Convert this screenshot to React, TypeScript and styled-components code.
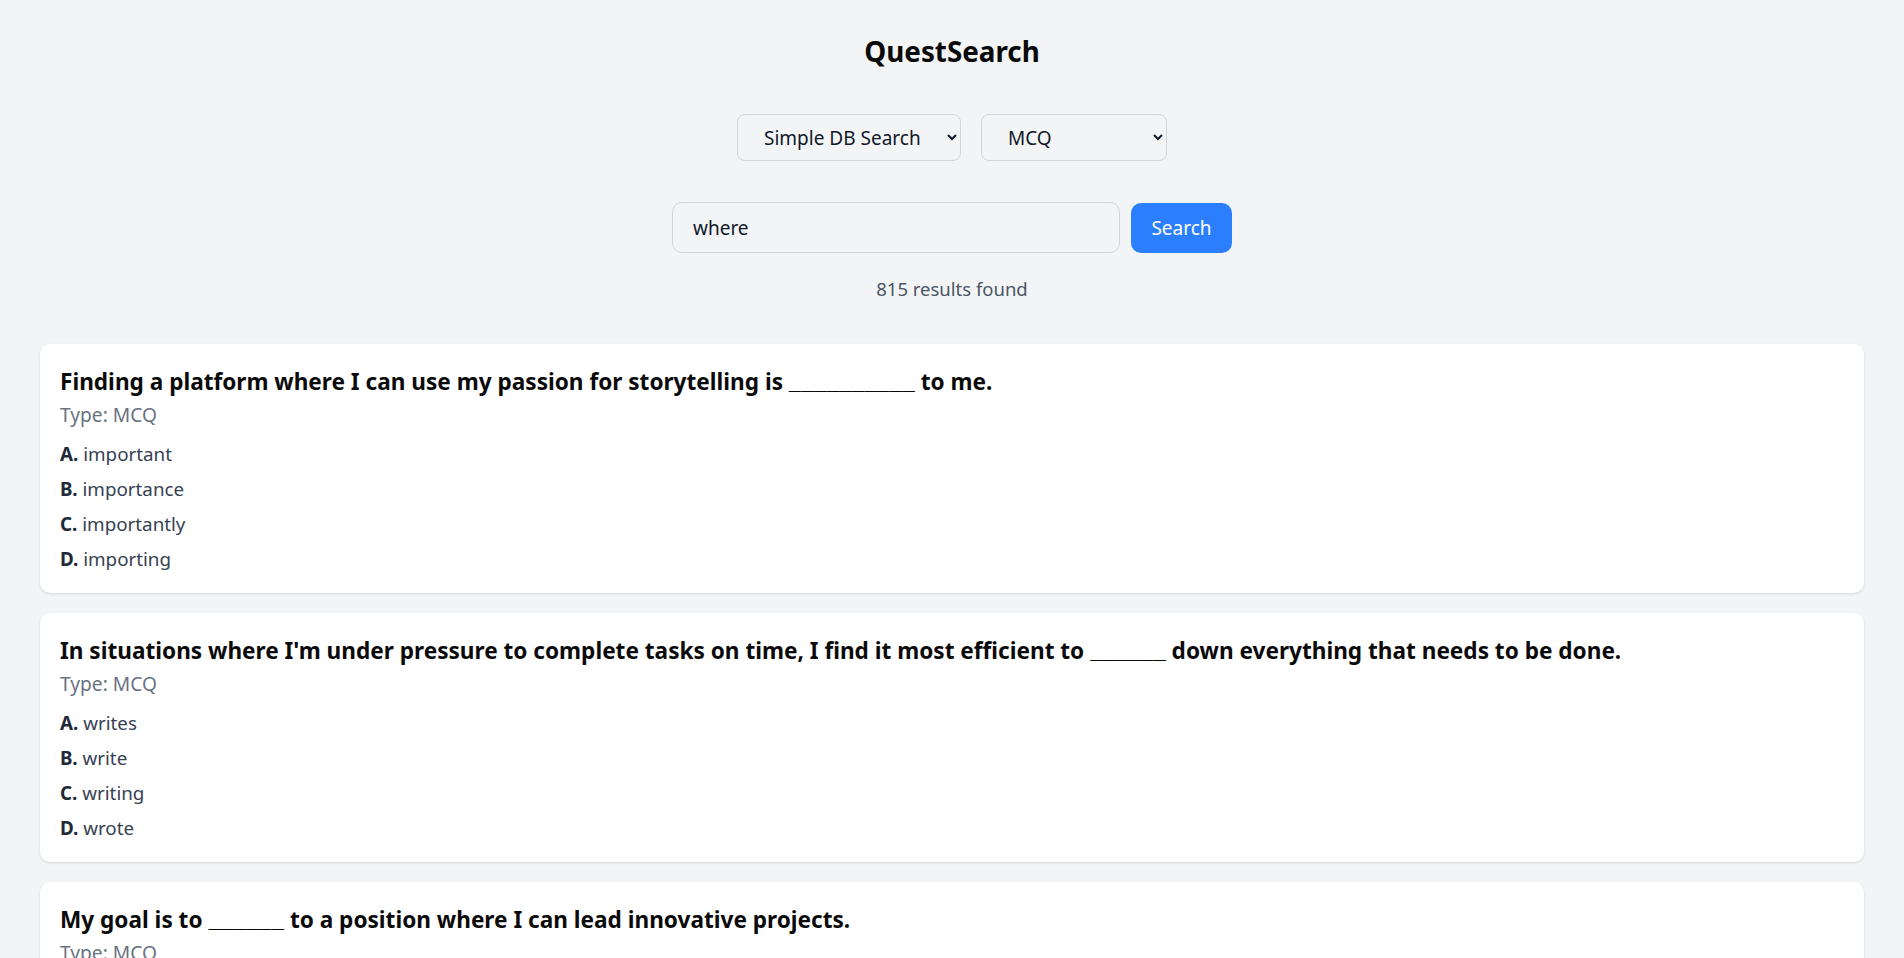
import React from "react";
import styled, { createGlobalStyle } from "styled-components";

const GlobalStyle = createGlobalStyle`
  * { box-sizing: border-box; }
  html, body { margin: 0; padding: 0; }
  body {
    background: #f3f4f6;
    font-family: "Noto Sans", "Open Sans", sans-serif;
    color: #101828;
  }
`;

const Page = styled.div`
  min-height: 100vh;
  padding: 33px 40px 40px;
`;

const Title = styled.h1`
  margin: 0;
  text-align: center;
  font-size: 27.8px;
  line-height: 36px;
  font-weight: 700;
  color: #0a0a0a;
`;

const Controls = styled.div`
  margin-top: 45px;
  display: flex;
  justify-content: center;
  gap: 20px;
`;

const Select = styled.select<{ $w: number }>`
  width: ${(p) => p.$w}px;
  height: 47px;
  padding: 0 14px 0 22px;
  font-family: inherit;
  font-size: 19px;
  color: #101828;
  background: transparent;
  border: 1px solid #d1d5db;
  border-radius: 8px;
`;

const SearchRow = styled.form`
  margin-top: 41px;
  display: flex;
  justify-content: center;
  align-items: center;
  gap: 11px;
`;

const Input = styled.input`
  width: 448px;
  height: 51px;
  padding: 0 20px;
  font-family: inherit;
  font-size: 19px;
  color: #101828;
  background: transparent;
  border: 1px solid #d1d5db;
  border-radius: 10px;
  outline: none;
`;

const Button = styled.button`
  width: 101px;
  height: 50px;
  border: none;
  border-radius: 10px;
  background: #2b7fff;
  color: #ffffff;
  font-family: inherit;
  font-size: 19px;
  cursor: pointer;
`;

const Count = styled.p`
  margin: 22px 0 0;
  text-align: center;
  font-size: 18.5px;
  line-height: 28px;
  color: #4a5565;
`;

const List = styled.div`
  margin-top: 41px;
  display: flex;
  flex-direction: column;
  gap: 20px;
`;

const Card = styled.article`
  background: #ffffff;
  border-radius: 10px;
  padding: 22px 20px 20px;
  box-shadow: 0 1px 3px rgba(0, 0, 0, 0.1), 0 1px 2px -1px rgba(0, 0, 0, 0.1);
`;

const Question = styled.h2`
  margin: 0 0 3px;
  font-size: 22.6px;
  line-height: 32px;
  font-weight: 700;
  color: #0a0a0a;
`;

const Blank = styled.span`
  font-family: "Liberation Mono", "DejaVu Sans Mono", monospace;
  font-size: 21px;
  font-weight: 700;
  line-height: 1;
`;

const TypeLabel = styled.p`
  margin: 0;
  font-size: 19.2px;
  line-height: 28px;
  color: #6a7282;
`;

const Options = styled.ul`
  list-style: none;
  margin: 11px 0 0;
  padding: 0;
  display: flex;
  flex-direction: column;
  gap: 7px;
`;

const Option = styled.li`
  font-size: 18.8px;
  line-height: 28px;
  color: #364153;
`;

const Letter = styled.span`
  font-weight: 700;
  color: #1e2939;
`;

type Q = { before: string; blank: string; after: string; options: string[] };

const questions: Q[] = [
  {
    before: "Finding a platform where I can use my passion for storytelling is ",
    blank: "__________",
    after: " to me.",
    options: ["important", "importance", "importantly", "importing"],
  },
  {
    before: "In situations where I'm under pressure to complete tasks on time, I find it most efficient to ",
    blank: "______",
    after: " down everything that needs to be done.",
    options: ["writes", "write", "writing", "wrote"],
  },
  {
    before: "My goal is to ",
    blank: "______",
    after: " to a position where I can lead innovative projects.",
    options: ["advance", "advancing", "advanced", "advancement"],
  },
];

const letters = ["A", "B", "C", "D"];

export default function App() {
  return (
    <>
      <GlobalStyle />
      <Page>
        <Title>QuestSearch</Title>
        <Controls>
          <Select $w={224} defaultValue="simple">
            <option value="simple">Simple DB Search</option>
            <option value="fuzzy">Fuzzy Search</option>
          </Select>
          <Select $w={186} defaultValue="MCQ">
            <option value="ALL">All Types</option>
            <option value="MCQ">MCQ</option>
            <option value="ANAGRAM">ANAGRAM</option>
            <option value="READ_ALONG">READ_ALONG</option>
          </Select>
        </Controls>
        <SearchRow onSubmit={(e) => e.preventDefault()}>
          <Input defaultValue="where" />
          <Button type="submit">Search</Button>
        </SearchRow>
        <Count>815 results found</Count>
        <List>
          {questions.map((q, i) => (
            <Card key={i}>
              <Question>
                {q.before}
                <Blank>{q.blank}</Blank>
                {q.after}
              </Question>
              <TypeLabel>Type: MCQ</TypeLabel>
              <Options>
                {q.options.map((o, j) => (
                  <Option key={j}>
                    <Letter>{letters[j]}.</Letter> {o}
                  </Option>
                ))}
              </Options>
            </Card>
          ))}
        </List>
      </Page>
    </>
  );
}
